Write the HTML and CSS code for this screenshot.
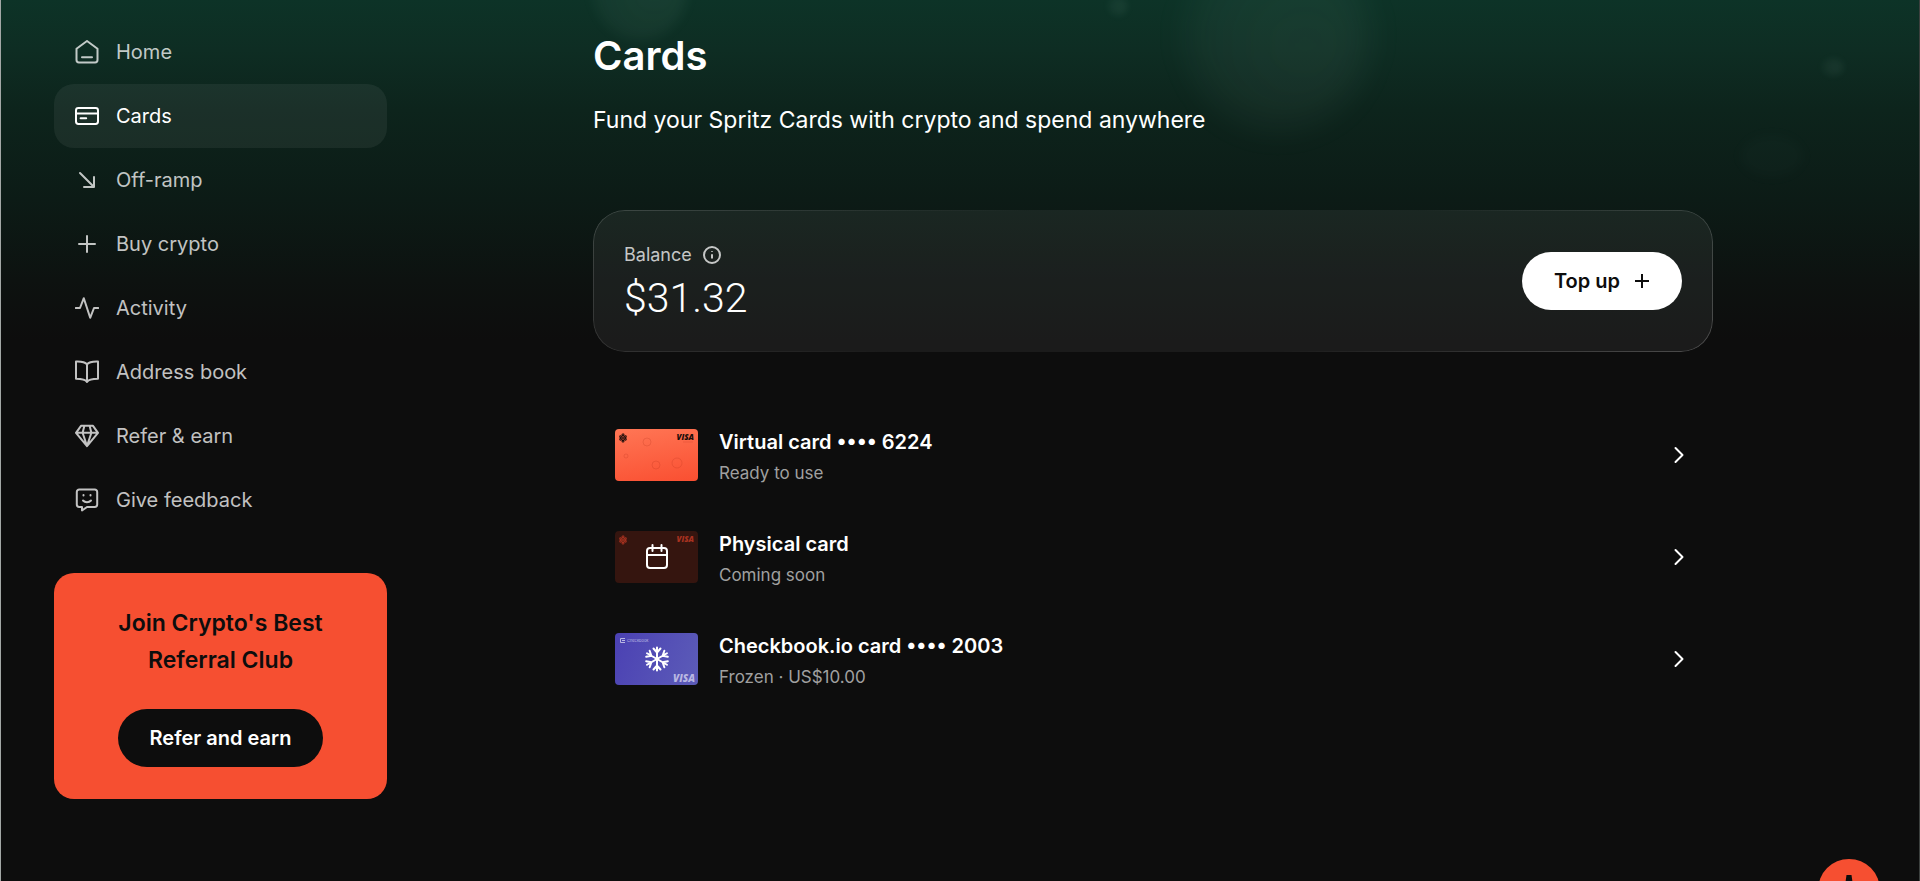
FILE: index.html
```html
<!DOCTYPE html>
<html lang="en">
<head>
<meta charset="utf-8">
<meta name="viewport" content="width=device-width, initial-scale=1">
<title>Cards</title>
<link rel="stylesheet" href="styles.css">
</head>
<body>
<svg class="defs" aria-hidden="true">
  <symbol id="flower" viewBox="0 0 10 12">
    <g fill="none" stroke="currentColor" stroke-width="1.3"><circle cx="5" cy="2" r="1.2"/><circle cx="5" cy="10" r="1.2"/><circle cx="2" cy="4.300" r="1.100"/><circle cx="8" cy="4.300" r="1.100"/><circle cx="2" cy="7.700" r="1.100"/><circle cx="8" cy="7.700" r="1.100"/><path d="M5 3v6M3 6h4"/></g>
  </symbol>
</svg>
<div class="bubbles" aria-hidden="true">
  <span class="bubble bubble-a"></span><span class="bubble bubble-b"></span><span class="bubble bubble-c"></span><span class="bubble bubble-d"></span><span class="bubble bubble-e"></span>
</div>
<div class="app">
  <aside class="sidebar">
    <nav class="nav" aria-label="Main">
      <a class="nav-link" href="#"><svg class="icon" viewBox="0 0 24 24"><path d="M1.500 8.800 12 1l10.500 7.800v11.300a2.400 2.400 0 0 1-2.400 2.400H3.900a2.400 2.400 0 0 1-2.400-2.400z"/><path d="M7 17.300h10"/></svg>Home</a>
      <a class="nav-link active" href="#" aria-current="page"><svg class="icon" viewBox="0 0 24 24"><rect x="1" y="4" width="22" height="16" rx="2.400"/><path d="M1 9.500h22M5.600 14.300h5.600"/></svg>Cards</a>
      <a class="nav-link" href="#"><svg class="icon" viewBox="0 0 24 24"><path d="M5 5l14 14M19 9v10H9"/></svg>Off-ramp</a>
      <a class="nav-link" href="#"><svg class="icon" viewBox="0 0 24 24"><path d="M12 4v16M4 12h16"/></svg>Buy crypto</a>
      <a class="nav-link" href="#"><svg class="icon" viewBox="0 0 24 24"><path d="M.8 12H5L8.800 2.200l6.400 19.600L19 12h4.200"/></svg>Activity</a>
      <a class="nav-link" href="#"><svg class="icon" viewBox="0 0 24 24"><path d="M12 4.400C10 1.800 6.400 1.300 1 1.500v17.300c5 0 9.300.2 11 3.200 1.700-3 6-3.200 11-3.200V1.500C17.600 1.300 14 1.800 12 4.400zM12 4.400V21"/></svg>Address book</a>
      <a class="nav-link" href="#"><svg class="icon" viewBox="0 0 24 24"><path d="M6 1.800h12l5 7L12 22.200 1 8.800zM1 8.800h22M9.400 1.800 7.600 8.800 12 22l4.400-13.200-1.800-7"/></svg>Refer &amp; earn</a>
      <a class="nav-link" href="#"><svg class="icon" viewBox="0 0 24 24"><path d="M4.200 1.500h15.600A2.400 2.400 0 0 1 22.200 3.900v12.700a2.400 2.400 0 0 1-2.400 2.400H12l-5 3.500V19H4.200a2.400 2.400 0 0 1-2.400-2.400V3.900a2.400 2.400 0 0 1 2.400-2.400z"/><path d="M8 12.500c2 2.300 6 2.300 8 0M8.500 7v.6M15.500 7v.6"/></svg>Give feedback</a>
    </nav>
    <section class="promo">
      <h2 class="promo-title">Join Crypto's Best Referral Club</h2>
      <button class="btn btn-dark" type="button">Refer and earn</button>
    </section>
  </aside>
  <main class="main">
    <div class="content">
      <h1 class="title">Cards</h1>
      <p class="subtitle">Fund your Spritz Cards with crypto and spend anywhere</p>
      <section class="balance">
        <div>
          <div class="balance-label">Balance <svg class="info" viewBox="0 0 18 18"><circle cx="9" cy="9" r="8"/><path d="M9 8.200V12.600M9 5.200v.8"/></svg></div>
          <div class="balance-value">$31.32</div>
        </div>
        <button class="btn btn-light" type="button">Top up <svg class="plus" viewBox="0 0 16 16"><path d="M8 1v14M1 8h14"/></svg></button>
      </section>
      <div class="cards">
        <a class="card-row" href="#">
          <span class="thumb thumb-virtual"><svg class="mark" viewBox="0 0 10 12"><use href="#flower"/></svg><span class="visa">VISA</span><svg class="drops" viewBox="0 0 83 52"><circle cx="32" cy="13" r="4"/><circle cx="11" cy="27" r="2"/><circle cx="41" cy="36" r="4"/><circle cx="62" cy="34" r="5"/><path d="M68 13h10"/></svg></span>
          <span class="card-text"><span class="card-name">Virtual card •••• 6224</span><span class="card-note">Ready to use</span></span>
          <svg class="chevron" viewBox="0 0 10 18"><path d="M1.500 2l7 7-7 7"/></svg>
        </a>
        <a class="card-row" href="#">
          <span class="thumb thumb-physical"><svg class="mark" viewBox="0 0 10 12"><use href="#flower"/></svg><span class="visa">VISA</span><svg class="thumb-icon" viewBox="0 0 26 26"><rect x="3" y="4" width="20" height="20" rx="3"/><path d="M3 11h20M8.500 1v6M17.500 1v6"/></svg></span>
          <span class="card-text"><span class="card-name">Physical card</span><span class="card-note">Coming soon</span></span>
          <svg class="chevron" viewBox="0 0 10 18"><path d="M1.500 2l7 7-7 7"/></svg>
        </a>
        <a class="card-row" href="#">
          <span class="thumb thumb-frozen"><svg class="brand-mark" viewBox="0 0 5 5"><path d="M5 .5H.5v4H5M2 2.500h3"/></svg><span class="brand">Checkbook</span><span class="visa">VISA</span><svg class="thumb-icon" viewBox="0 0 26 26">
            <g id="arm"><path d="M13 13V1.500M9.500 2.500 13 6.500l3.500-4"/></g>
            <use href="#arm" transform="rotate(60 13 13)"/><use href="#arm" transform="rotate(120 13 13)"/><use href="#arm" transform="rotate(180 13 13)"/><use href="#arm" transform="rotate(240 13 13)"/><use href="#arm" transform="rotate(300 13 13)"/></svg></span>
          <span class="card-text"><span class="card-name">Checkbook.io card •••• 2003</span><span class="card-note">Frozen · US$10.00</span></span>
          <svg class="chevron" viewBox="0 0 10 18"><path d="M1.500 2l7 7-7 7"/></svg>
        </a>
      </div>
    </div>
  </main>
</div>
<button class="fab" type="button" aria-label="Open chat"><svg viewBox="0 0 24 28"><path d="M9.500 0h5l1 7 5 5-5 5-1 8h-5l-1-8-5-5 5-5z"/></svg></button>
</body>
</html>
```

FILE: styles.css
```css
* { box-sizing: border-box; }
body {
  margin: 0;
  min-height: 100vh;
  color: #fff;
  font-family: Inter, "Liberation Sans", sans-serif;
  background: #0d0d0d linear-gradient(180deg, #0d3327 0, #0e2d23 50px, #0d241c 110px, #0c1b16 200px, #0d1210 280px, #0d0d0d 340px) no-repeat;
  border-left: 1px solid #a3a8a6;
  border-right: 1px solid #3c403e;
}
.defs { display: none; }
.bubbles { position: absolute; inset: 0; overflow: hidden; pointer-events: none; }
.bubble { position: absolute; border-radius: 50%; background: radial-gradient(circle at 65% 55%, rgba(170, 220, 200, 0.07), rgba(170, 220, 200, 0.03)); filter: blur(6px); }
.bubble-a { left: 592px; top: -64px; width: 96px; height: 104px; }
.bubble-b { left: 1185px; top: -60px; width: 185px; height: 190px; filter: blur(16px); }
.bubble-c { left: 1108px; top: -4px; width: 20px; height: 20px; filter: blur(3px); }
.bubble-d { left: 1822px; top: 58px; width: 22px; height: 18px; filter: blur(3px); }
.bubble-e { left: 1740px; top: 134px; width: 64px; height: 44px; background: rgba(170, 220, 200, 0.02); }
.app { position: relative; display: flex; min-height: 100vh; }
.sidebar { width: 386px; flex: none; padding: 20px 0 40px 53px; }
.nav { display: flex; flex-direction: column; }
.nav-link {
  display: flex;
  align-items: center;
  gap: 17px;
  height: 64px;
  padding: 0 21px;
  border-radius: 20px;
  color: rgba(255, 255, 255, 0.75);
  font-size: 20px;
  text-decoration: none;
}
.nav-link.active { color: #fff; background: rgba(255, 255, 255, 0.06); }
.icon { width: 24px; height: 24px; fill: none; stroke: currentColor; stroke-width: 2; stroke-linecap: round; stroke-linejoin: round; }
.promo {
  display: flex;
  flex-direction: column;
  align-items: center;
  gap: 30px;
  margin-top: 41px;
  padding: 32px 56px;
  border-radius: 20px;
  background: #f64f31;
}
.promo-title { margin: 0; color: #0d0d0d; font-size: 23px; font-weight: 600; line-height: 37px; text-align: center; }
.btn {
  display: flex;
  align-items: center;
  gap: 14px;
  height: 58px;
  padding: 0 32px;
  border: 0;
  border-radius: 29px;
  font: 600 20px Inter, "Liberation Sans", sans-serif;
  white-space: nowrap;
}
.btn-dark { color: #fff; background: #0d0d0d; }
.btn-light { color: #0d0d0d; background: #fff; }
.plus { width: 16px; height: 16px; fill: none; stroke: currentColor; stroke-width: 2; }
.main { flex: 1; min-width: 0; padding: 32px 24px; }
.content { max-width: 1120px; margin: 0 auto; }
.title { margin: 0; font-size: 40px; font-weight: 600; line-height: 48px; }
.subtitle { margin: 24px 0 0; font-size: 23px; line-height: 32px; }
.balance {
  position: relative;
  display: flex;
  align-items: center;
  justify-content: space-between;
  margin-top: 74px;
  padding: 30px 31px;
  border-radius: 32px;
  background: rgba(255, 255, 255, 0.06);
}
.balance::before {
  content: "";
  position: absolute;
  inset: 0;
  padding: 1px;
  border-radius: 32px;
  background: linear-gradient(135deg, rgba(255, 255, 255, 0.16), transparent 35%, transparent 65%, rgba(255, 255, 255, 0.22));
  mask: linear-gradient(#000 0 0) content-box exclude, linear-gradient(#000 0 0);
  pointer-events: none;
}
.balance-label { display: flex; align-items: center; gap: 11px; color: rgba(255, 255, 255, 0.75); font-size: 18px; line-height: 30px; }
.info { width: 18px; height: 18px; fill: none; stroke: currentColor; stroke-width: 2; }
.balance-value { margin-top: 4px; font-family: Roboto, "Liberation Sans", sans-serif; font-size: 41px; font-weight: 300; line-height: 48px; }
.cards { margin-top: 52px; }
.card-row { display: flex; align-items: center; gap: 21px; height: 102px; padding: 0 29px 0 22px; color: #fff; text-decoration: none; }
.thumb { position: relative; flex: none; width: 83px; height: 52px; border-radius: 4px; overflow: hidden; }
.thumb-virtual { color: #1b0d0a; background: linear-gradient(170deg, #ff7655, #fa4f31); }
.thumb-physical { color: #a83220; background: #35150f; }
.thumb-frozen { color: #b9b7e2; background: linear-gradient(110deg, #4b41b3, #5c5cb8); }
.mark { position: absolute; left: 4px; top: 4px; width: 8px; height: 10px; }
.visa { position: absolute; right: 4px; top: 3px; font: italic 800 8px/9px "Open Sans", sans-serif; }
.thumb-frozen .visa { top: auto; right: 3px; bottom: 1px; font-size: 10px; line-height: 12px; }
.brand-mark { position: absolute; left: 5px; top: 5px; width: 5px; height: 5px; fill: none; stroke: currentColor; }
.brand { position: absolute; left: 12px; top: 5px; font-size: 4px; line-height: 5px; }
.drops { position: absolute; inset: 0; fill: none; stroke: rgba(170, 40, 20, 0.2); stroke-width: 1; }
.thumb-icon { position: absolute; left: 29px; top: 13px; width: 26px; height: 26px; fill: none; stroke: #fff; stroke-width: 2; stroke-linecap: round; stroke-linejoin: round; }
.card-text { flex: 1; display: flex; flex-direction: column; padding-top: 4px; }
.card-name { font-size: 20px; font-weight: 600; line-height: 32px; }
.card-note { color: #a0a0a0; font-size: 17px; line-height: 30px; }
.chevron { width: 10px; height: 18px; fill: none; stroke: #fff; stroke-width: 2; stroke-linecap: round; stroke-linejoin: round; }
.fab { position: fixed; right: 40px; bottom: -40px; display: flex; align-items: flex-start; justify-content: center; width: 62px; height: 62px; padding: 16px 0 0; border: 0; border-radius: 50%; background: #f64f31; }
.fab svg { display: block; width: 24px; height: 28px; fill: #0d0d0d; }
```
